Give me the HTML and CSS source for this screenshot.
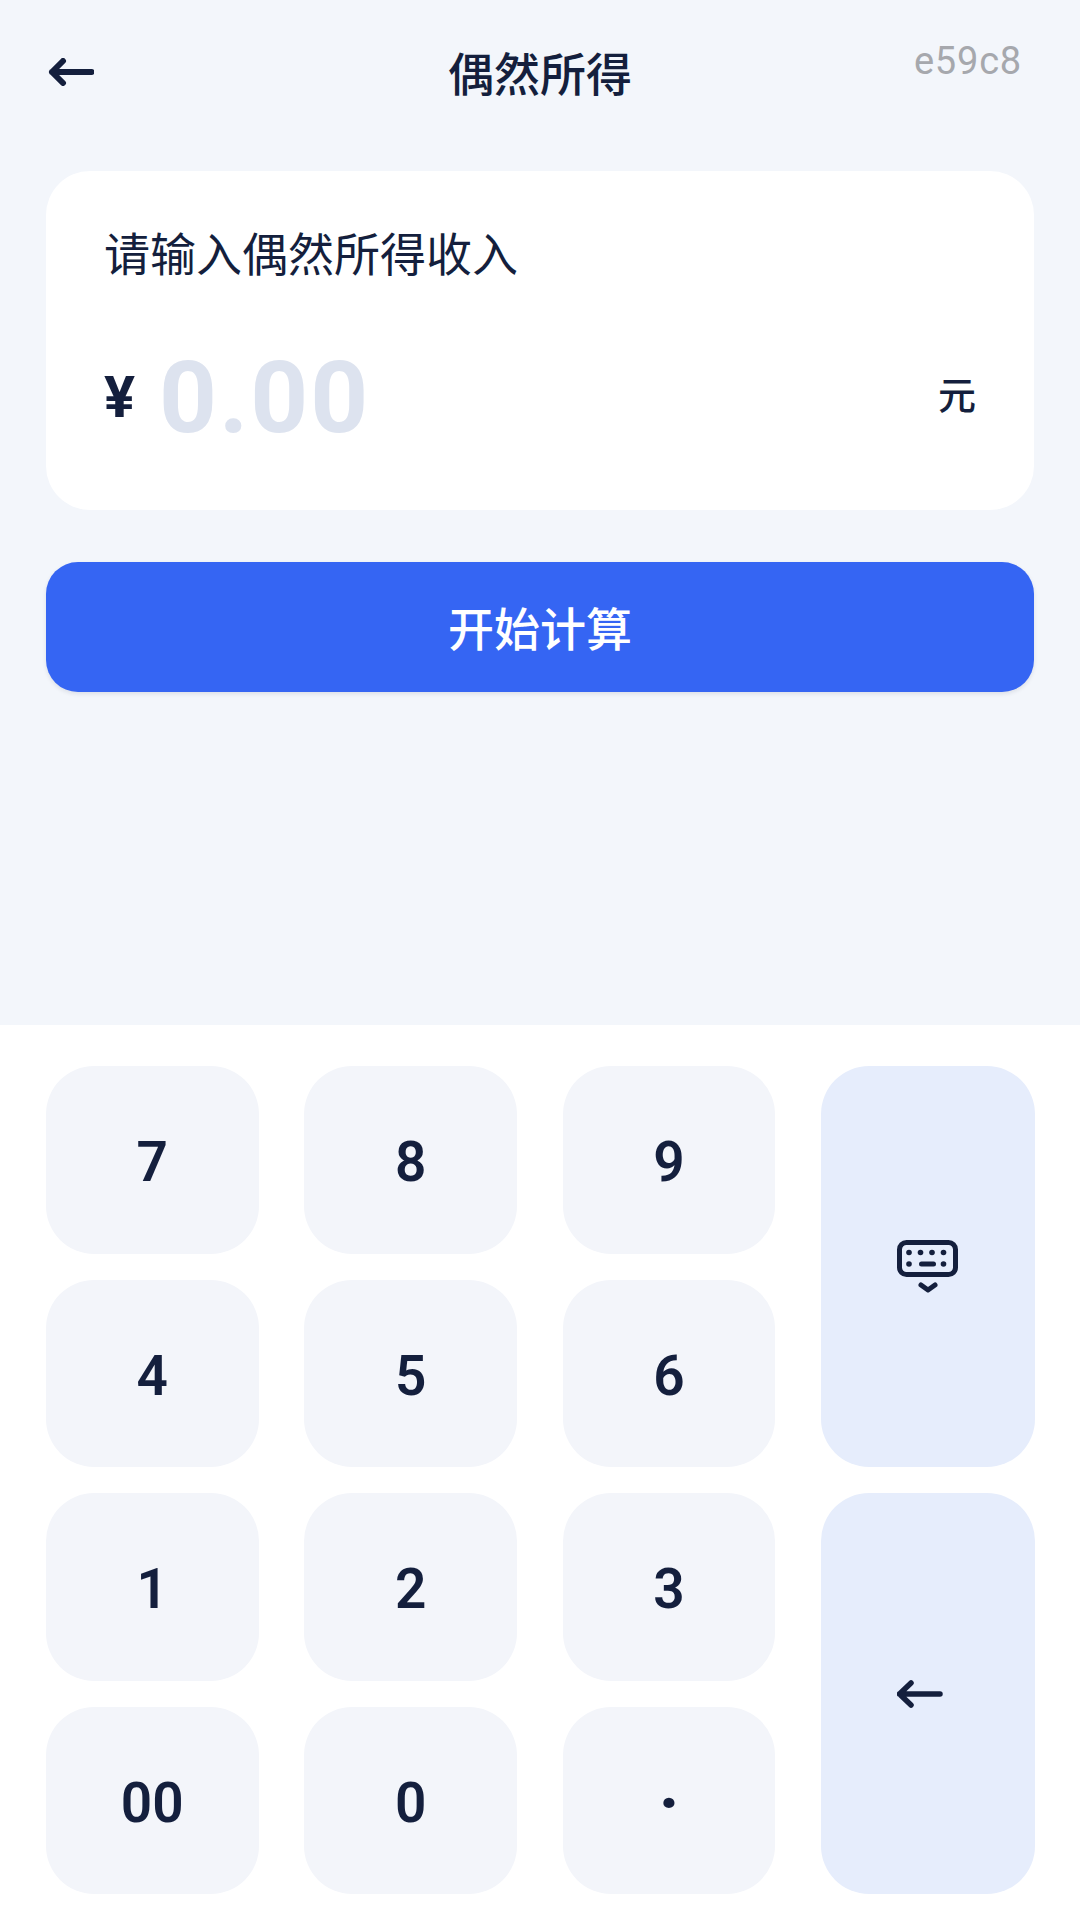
FILE: index.html
```html
<!DOCTYPE html>
<html lang="zh-CN">
<head>
  <meta charset="UTF-8">
  <meta name="viewport" content="width=device-width, initial-scale=1.0">
  <title>偶然所得</title>
  <link rel="stylesheet" href="styles.css">
</head>
<body>
  <div class="page">
    <div class="main">
      <div class="hd">
        <svg class="hd_back" width="46" height="28" viewBox="0 0 46 28">
          <path d="M4 14H43.5M15 3L4 14L15 25" fill="none" stroke="#141f3d" stroke-width="6" stroke-linecap="round" stroke-linejoin="round"/>
        </svg>
        <div class="hd_title">偶然所得</div>
        <div class="hd_code">e59c8</div>
      </div>

      <div class="card">
        <div class="card_label">请输入偶然所得收入</div>
        <div class="amount">
          <span class="amount_sign">¥</span>
          <span class="amount_value">0.00</span>
          <span class="amount_unit">元</span>
        </div>
      </div>

      <div class="start_btn">开始计算</div>
    </div>

    <div class="keypad">
      <div class="key">7</div>
      <div class="key">8</div>
      <div class="key">9</div>
      <div class="key key_side key_tall">
        <svg width="62" height="53" viewBox="0 0 62 53">
          <rect x="2.5" y="2.5" width="56" height="32" rx="7" fill="none" stroke="#141f3d" stroke-width="5"/>
          <g fill="#141f3d">
            <circle cx="12" cy="12.5" r="2.8"/>
            <circle cx="23.5" cy="12.5" r="2.8"/>
            <circle cx="35" cy="12.5" r="2.8"/>
            <circle cx="46.5" cy="12.5" r="2.8"/>
            <circle cx="12" cy="24" r="2.8"/>
            <circle cx="46.5" cy="24" r="2.8"/>
            <rect x="22" y="21.5" width="17" height="5" rx="2.5"/>
          </g>
          <path d="M24 45L31 50L38 45" fill="none" stroke="#141f3d" stroke-width="5" stroke-linecap="round" stroke-linejoin="round"/>
        </svg>
      </div>
      <div class="key">4</div>
      <div class="key">5</div>
      <div class="key">6</div>
      <div class="key">1</div>
      <div class="key">2</div>
      <div class="key">3</div>
      <div class="key key_side key_tall">
        <svg width="62" height="28" viewBox="0 0 62 28">
          <path d="M2.5 14H43M14 3L2.5 14L14 25" fill="none" stroke="#141f3d" stroke-width="5.5" stroke-linecap="round" stroke-linejoin="round"/>
        </svg>
      </div>
      <div class="key">00</div>
      <div class="key">0</div>
      <div class="key key_dot">·</div>
    </div>
  </div>
</body>
</html>
```

FILE: styles.css
```css
* {
  margin: 0;
  padding: 0;
  box-sizing: border-box;
}
body {
  width: 1080px;
  height: 1920px;
  overflow: hidden;
  font-family: "Roboto", "Noto Sans CJK SC", sans-serif;
  color: #141f3d;
  background-color: #fff;
}
.page {
  display: flex;
  flex-direction: column;
  height: 1920px;
}
.main {
  flex: 1;
  padding: 0 46px;
  background-color: #f3f6fb;
}
.hd {
  display: grid;
  grid-template-columns: 1fr auto 1fr;
  align-items: center;
  height: 144px;
}
.hd_back {
  margin-left: 2px;
}
.hd_title {
  margin-bottom: 3px;
  font-size: 46px;
  font-weight: 500;
  font-family: "Noto Sans CJK SC", sans-serif;
}
.hd_code {
  justify-self: end;
  margin: 0 12px 22px 0;
  font-size: 38px;
  letter-spacing: 0.8px;
  color: #a6a8ad;
}
.card {
  margin-top: 27px;
  padding: 50px 58px 53px;
  border-radius: 44px;
  background-color: #fff;
}
.card_label {
  font-size: 46px;
  line-height: 60px;
  font-family: "Noto Sans CJK SC", sans-serif;
}
.amount {
  display: flex;
  align-items: center;
  height: 120px;
  margin-top: 56px;
}
.amount_sign {
  font-size: 58px;
  font-weight: 700;
}
.amount_value {
  margin-left: 24px;
  font-size: 101px;
  font-weight: 700;
  letter-spacing: 2px;
  color: #dde3ef;
}
.amount_unit {
  margin: 0 0 10px auto;
  font-size: 38px;
  font-weight: 500;
  font-family: "Noto Sans CJK SC", sans-serif;
}
.start_btn {
  height: 130px;
  margin-top: 52px;
  border-radius: 32px;
  background-color: #3565f3;
  box-shadow: 0 2px 4px rgba(20, 31, 61, 0.1);
  text-align: center;
  line-height: 128px;
  font-size: 46px;
  font-weight: 500;
  font-family: "Noto Sans CJK SC", sans-serif;
  color: #fff;
}
.keypad {
  display: grid;
  grid-template-columns: repeat(3, 212.5px) 213.5px;
  grid-auto-rows: 187.5px;
  column-gap: 45.9px;
  row-gap: 26px;
  height: 895px;
  padding: 41px 46px 0;
}
.key {
  display: flex;
  align-items: center;
  justify-content: center;
  padding-top: 5px;
  border-radius: 48px;
  background-color: #f3f5fa;
  font-size: 55px;
  font-weight: 600;
}
.key_side {
  padding-top: 0;
  background-color: #e6edfc;
  grid-column: 4;
}
.key_tall {
  grid-row: span 2;
}
.key_dot {
  font-size: 70px;
  font-weight: 700;
}
```
